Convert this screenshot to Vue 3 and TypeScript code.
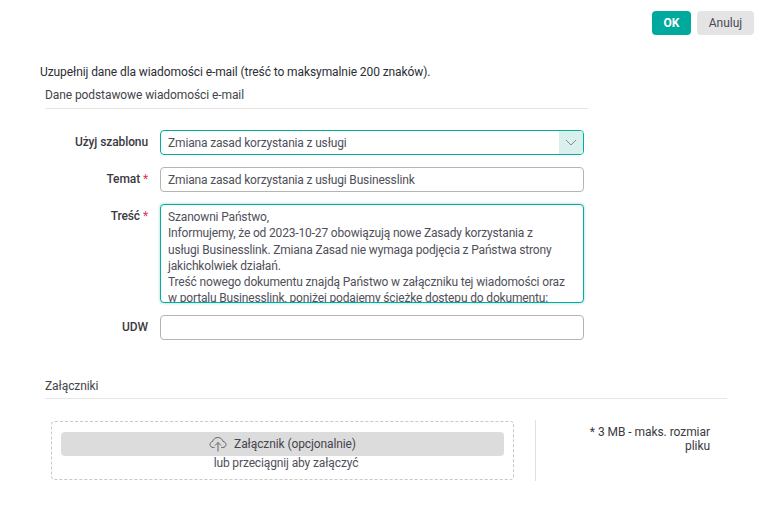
<script setup lang="ts">
const body = `Szanowni Państwo,
Informujemy, że od 2023-10-27 obowiązują nowe Zasady korzystania z usługi Businesslink. Zmiana Zasad nie wymaga podjęcia z Państwa strony jakichkolwiek działań.
Treść nowego dokumentu znajdą Państwo w załączniku tej wiadomości oraz w portalu Businesslink, poniżej podajemy ścieżkę dostępu do dokumentu:`
</script>

<template>
  <div class="page">
    <div class="actions">
      <button class="btn ok">OK</button>
      <button class="btn cancel">Anuluj</button>
    </div>
    <p class="intro">Uzupełnij dane dla wiadomości e-mail (treść to maksymalnie 200 znaków).</p>
    <section class="basic">
      <h2 class="section-title">Dane podstawowe wiadomości e-mail</h2>
      <div class="form">
        <div class="row">
          <label class="label">Użyj szablonu</label>
          <div class="field select focus">
            <span class="value">Zmiana zasad korzystania z usługi</span>
            <span class="arrow">
              <svg width="12" height="7" viewBox="0 0 12 7" fill="none"><path d="M1 1l5 5 5-5" stroke="#7f8f8c" stroke-width="1"/></svg>
            </span>
          </div>
        </div>
        <div class="row">
          <label class="label">Temat <i>*</i></label>
          <div class="field"><span class="value">Zmiana zasad korzystania z usługi Businesslink</span></div>
        </div>
        <div class="row">
          <label class="label">Treść <i>*</i></label>
          <div class="field area focus"><div class="area-text">{{ body }}</div></div>
        </div>
        <div class="row">
          <label class="label">UDW</label>
          <div class="field"></div>
        </div>
      </div>
    </section>
    <section class="attach">
      <h2 class="section-title">Załączniki</h2>
      <div class="attach-body">
        <div class="drop">
          <div class="drop-btn">
            <svg width="18" height="16" viewBox="0 0 18 16" fill="none" stroke="#666" stroke-width="1">
              <path d="M5.5 11.5H4.2C2.4 11.5 1 10.2 1 8.5c0-1.5 1.1-2.8 2.6-3C4.1 3.2 6.2 1.5 8.8 1.5c2.5 0 4.6 1.6 5.2 3.9 1.7.2 3 1.5 3 3.1 0 1.7-1.4 3-3.2 3h-1.6"/>
              <path d="M9 15.5V6.5M6 9.5l3-3 3 3"/>
            </svg>
            <span>Załącznik (opcjonalnie)</span>
          </div>
          <div class="drop-hint">lub przeciągnij aby załączyć</div>
        </div>
        <div class="note">* 3 MB - maks. rozmiar pliku</div>
      </div>
    </section>
  </div>
</template>

<style>
html, body { background: #fff; }
</style>

<style scoped>
.page {
  width: 772px;
  height: 518px;
  box-sizing: border-box;
  padding: 11px 18px 0 40px;
  font-family: Roboto, "Liberation Sans", sans-serif;
  font-size: 12px;
  color: #3f3f46;
  overflow: hidden;
}
.actions { display: flex; justify-content: flex-end; gap: 6px; }
.btn {
  height: 24px;
  border: 0;
  border-radius: 4px;
  font-family: inherit;
  font-size: 12px;
  padding: 0;
}
.ok { width: 39px; background: #00a99d; color: #fff; font-weight: 700; }
.cancel { width: 57px; background: #e4e4e4; color: #4a4a55; }
.intro { margin: 30px 0 0; line-height: 14px; color: #2d2d33; letter-spacing: -0.09px; }
.basic { margin: 8px 0 0 5px; width: 543px; }
.section-title {
  margin: 0;
  padding-bottom: 5px;
  border-bottom: 1px solid #e5e5e5;
  font-size: 12px;
  font-weight: 400;
  line-height: 16px;
  color: #44444c;
  letter-spacing: -0.09px;
}
.form { display: flex; flex-direction: column; gap: 12px; margin-top: 21px; }
.row { display: flex; gap: 12px; align-items: flex-start; }
.label {
  width: 103px;
  flex: none;
  text-align: right;
  line-height: 24px;
  font-weight: 500;
  color: #3a3a42;
  letter-spacing: -0.1px;
}
.label i { font-style: normal; color: #e2364a; font-weight: 400; }
.field {
  box-sizing: border-box;
  width: 424px;
  height: 25px;
  border: 1px solid #b4b4b4;
  border-radius: 4px;
  display: flex;
  align-items: center;
  padding-left: 7px;
  color: #50505a;
  background: #fff;
  letter-spacing: -0.16px;
}
.focus { border-color: #00ad9f; }
.select { padding-right: 0; justify-content: space-between; overflow: hidden; }
.arrow {
  width: 24px;
  height: 100%;
  background: #daf0ec;
  display: flex;
  align-items: center;
  justify-content: center;
}
.area {
  height: 99px;
  align-items: flex-start;
  overflow: hidden;
  box-shadow: 0 0 3px rgba(0, 169, 157, 0.45);
}
.area-text {
  white-space: pre-wrap;
  width: 398px;
  line-height: 16.3px;
  padding-top: 4px;
}
.attach { margin-left: 5px; width: 682px; margin-top: 38px; }
.attach .section-title { padding-bottom: 4px; }
.attach-body { display: flex; margin-top: 22px; }
.drop {
  box-sizing: border-box;
  width: 463px;
  height: 59px;
  margin-left: 6px;
  border: 1px dashed #c8c8c8;
  border-radius: 4px;
  padding: 10px 9px 0;
  text-align: center;
  letter-spacing: -0.1px;
}
.drop-btn {
  height: 24px;
  background: #dcdcdc;
  border-radius: 4px;
  display: flex;
  align-items: center;
  justify-content: center;
  gap: 7px;
  color: #44444c;
}
.drop-hint { line-height: 14px; color: #50505a; padding-left: 7px; letter-spacing: -0.13px; }
.note {
  width: 175px;
  height: 61px;
  margin-left: 21px;
  margin-top: -1px;
  box-sizing: border-box;
  border-left: 1px solid #e0e0e0;
  padding: 5px 0 0 40px;
  text-align: right;
  line-height: 14px;
  color: #3a3a42;
  letter-spacing: -0.05px;
}
</style>
